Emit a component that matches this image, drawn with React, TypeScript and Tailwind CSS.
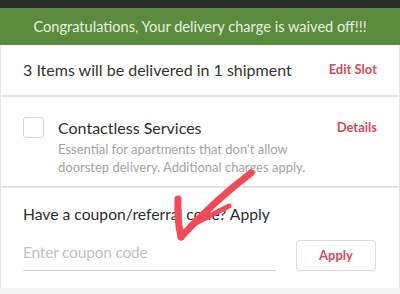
import React from "react";

function Scribble() {
  return (
    <svg
      className="pointer-events-none absolute left-0 top-0"
      width="400"
      height="294"
      viewBox="0 0 400 294"
      fill="none"
      stroke="#f04b57"
      strokeLinecap="round"
      strokeLinejoin="round"
    >
      <path d="M251 173 Q214 201 181 237" strokeWidth="7" />
      <path d="M178 199 Q177 220 181 237" strokeWidth="7" />
      <path d="M190 226 L229 206" strokeWidth="5" />
    </svg>
  );
}

export default function App() {
  return (
    <div
      className="relative h-[294px] w-[400px] overflow-hidden bg-[#f3f3f3]"
      style={{ fontFamily: "Lato, 'Open Sans', sans-serif" }}
    >
      <div className="h-2 bg-[#2b2b2b]" />
      <div className="flex h-[37px] items-center justify-center bg-[#5a8a3b] text-[14.6px] text-[#e9f1e2]">
        Congratulations, Your delivery charge is waived off!!!
      </div>

      <div className="border-x border-[#e6e6e6] bg-white">
        <div className="flex h-[50px] items-center justify-between px-[22px]">
          <span className="text-[16px] text-[#333]">3 Items will be delivered in 1 shipment</span>
          <span className="text-[13px] font-bold text-[#d44a5c]">Edit Slot</span>
        </div>
        <div className="h-[2px] bg-[#e4e4e4]" />

        <div className="flex h-[89px] items-start px-[22px] pt-[20px]">
          <div className="h-[21px] w-[21px] shrink-0 rounded-[3px] border border-[#d6d6d6]" />
          <div className="ml-[14px] flex-1">
            <div className="text-[16px] leading-[21px] text-[#2d2d2d]">Contactless Services</div>
            <div className="mt-[2px] text-[13px] leading-[18px] text-[#a3a3a3]">
              Essential for apartments that don't allow
              <br />
              doorstep delivery. Additional charges apply.
            </div>
          </div>
          <span className="mt-[1px] text-[13px] font-bold text-[#d44a5c]">Details</span>
        </div>
        <div className="h-[2px] bg-[#e4e4e4]" />

        <div className="h-[100px] px-[22px] pt-[16px]">
          <div className="text-[15.7px] leading-[20px] text-[#2d2d2d]">Have a coupon/referral code? Apply</div>
          <div className="mt-[15px] flex items-end">
            <div className="h-[32px] w-[253px] border-b border-[#d0d0d0] pb-[3px] text-[15.5px] leading-[26px] tracking-[-0.2px] text-[#c0c0c0]">
              Enter coupon code
            </div>
            <div className="ml-auto mr-[1px] flex h-[31px] w-[80px] items-center justify-center rounded-[3px] border border-[#dcdcdc] text-[13px] font-bold text-[#d44a5c]">
              Apply
            </div>
          </div>
        </div>
      </div>

      <Scribble />
    </div>
  );
}
